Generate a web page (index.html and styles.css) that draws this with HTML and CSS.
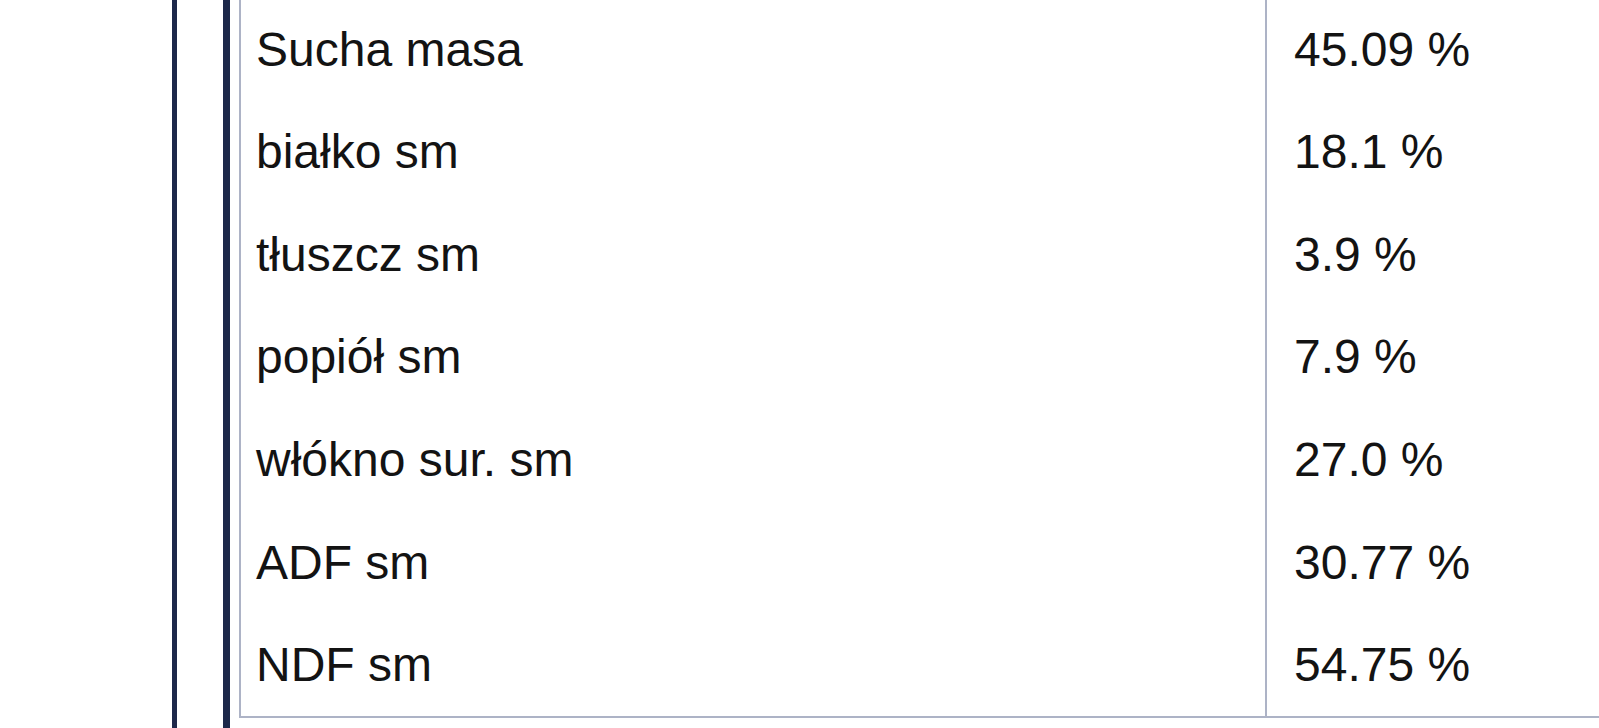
FILE: index.html
```html
<!DOCTYPE html>
<html lang="pl">
<head>
<meta charset="utf-8">
<title>Analiza</title>
<link rel="stylesheet" href="styles.css">
</head>
<body>
<div class="page">
  <div class="rule rule-thin"></div>
  <div class="rule rule-thick"></div>
  <div class="table">
    <div class="cell name">Sucha masa</div><div class="cell value">45.09 %</div>
    <div class="cell name">białko sm</div><div class="cell value">18.1 %</div>
    <div class="cell name">tłuszcz sm</div><div class="cell value">3.9 %</div>
    <div class="cell name">popiół sm</div><div class="cell value">7.9 %</div>
    <div class="cell name">włókno sur. sm</div><div class="cell value">27.0 %</div>
    <div class="cell name">ADF sm</div><div class="cell value">30.77 %</div>
    <div class="cell name">NDF sm</div><div class="cell value">54.75 %</div>
  </div>
</div>
</body>
</html>
```

FILE: styles.css
```css
html, body {
  margin: 0;
  padding: 0;
  background: #ffffff;
}

body {
  width: 1599px;
  height: 728px;
  overflow: hidden;
  font-family: "Liberation Sans", Arial, sans-serif;
  color: #131313;
}

.page {
  display: flex;
  align-items: flex-start;
  height: 728px;
  padding-left: 172px;
}

.rule {
  align-self: stretch;
  background: #1d284a;
  flex: none;
}

.rule-thin {
  width: 5px;
  margin-right: 46px;
}

.rule-thick {
  width: 7px;
  margin-right: 9px;
}

.table {
  flex: 1;
  min-width: 0;
  margin-top: -4.2px;
  display: grid;
  grid-template-columns: 1026px 1fr;
  grid-auto-rows: 102.6px;
  border: 2px solid #adb3c6;
  border-right: none;
}

.cell {
  display: flex;
  align-items: center;
  font-size: 48px;
  white-space: nowrap;
}

.name {
  padding-left: 15px;
  border-right: 2px solid #adb3c6;
}

.value {
  padding-left: 27px;
}
```
